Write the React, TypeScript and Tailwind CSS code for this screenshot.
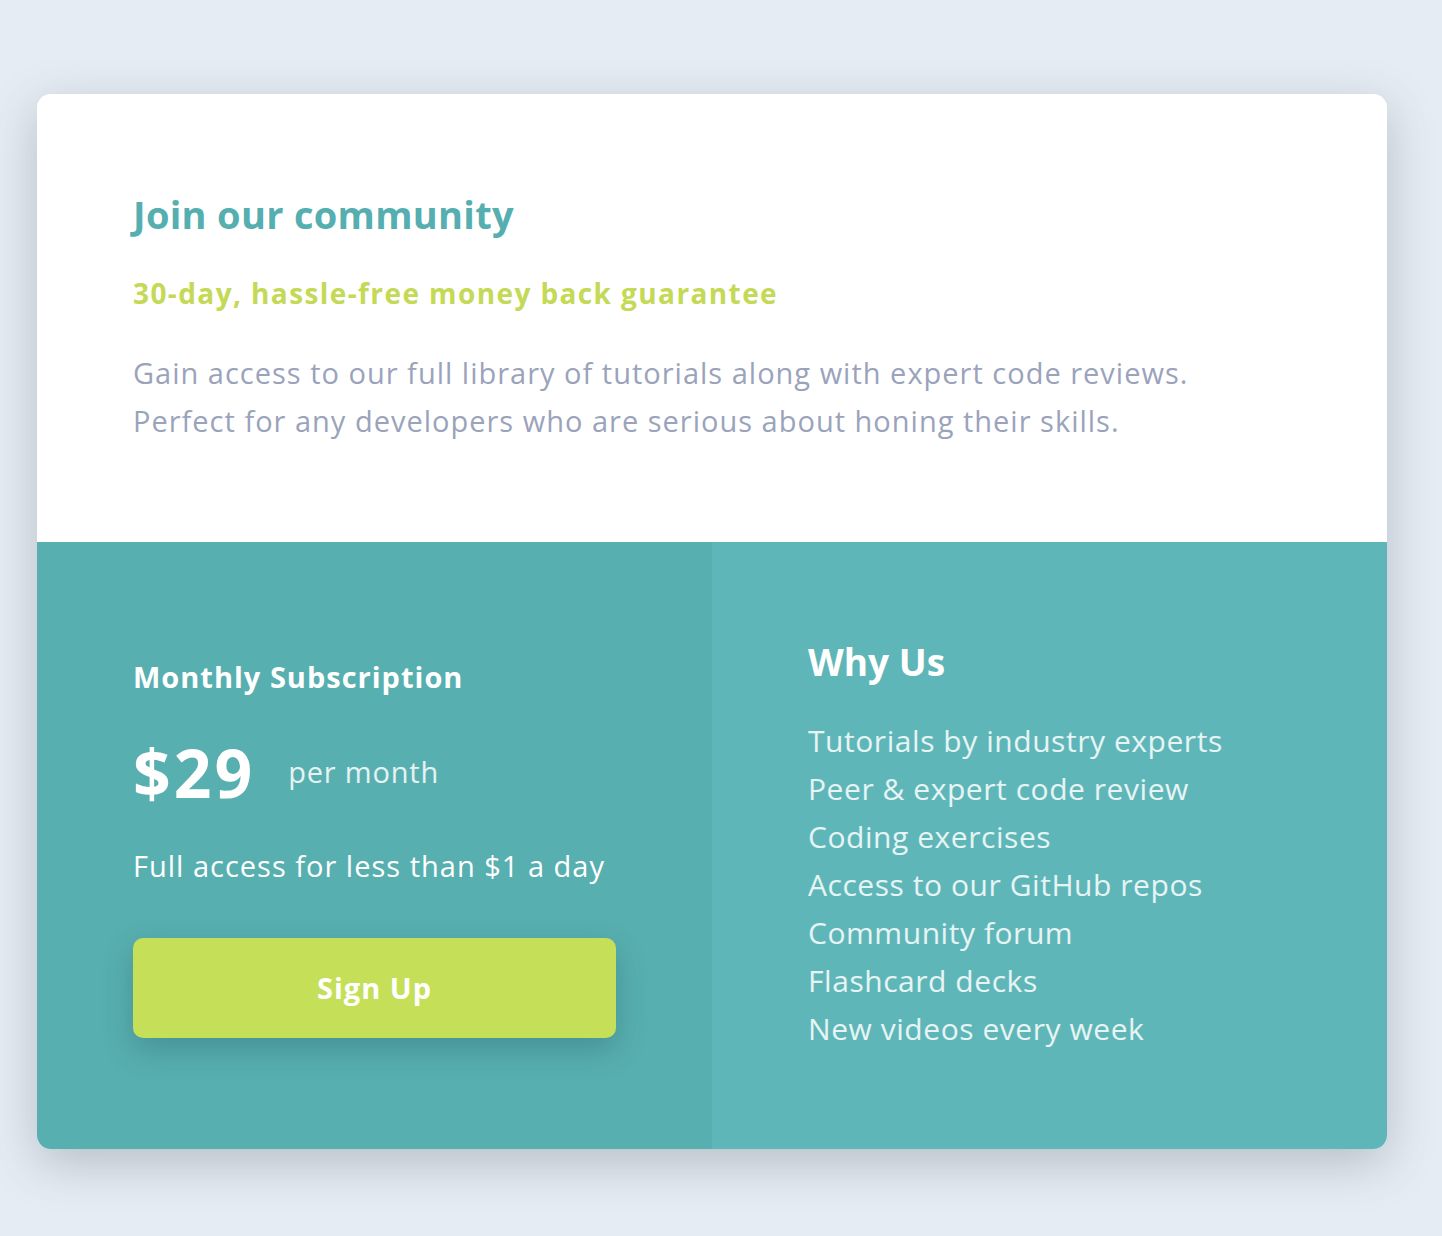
const features = [
  'Tutorials by industry experts',
  'Peer & expert code review',
  'Coding exercises',
  'Access to our GitHub repos',
  'Community forum',
  'Flashcard decks',
  'New videos every week',
];

export default function App() {
  return (
    <div className="min-h-[1236px] bg-[#e5ecf4] pt-[94px] pl-[37px] font-['Open_Sans',sans-serif]">
      <div className="w-[1350px] overflow-hidden rounded-[14px] shadow-[0_14px_48px_rgba(60,72,82,0.28)]">
        {/* top */}
        <section className="bg-white px-[96px] pt-[96px] pb-[97px]">
          <h1 className="text-[38px] leading-[48px] font-bold tracking-[0.3px] text-[#55aeb0]">Join our community</h1>
          <p className="mt-[35px] text-[28px] leading-[40px] font-bold tracking-[1.4px] text-[#c4d955]">
            30-day, hassle-free money back guarantee
          </p>
          <p className="mt-[36px] text-[29px] leading-[48px] tracking-[1px] text-[#9aa3bb]">
            Gain access to our full library of tutorials along with expert code reviews.
            <br />
            Perfect for any developers who are serious about honing their skills.
          </p>
        </section>

        {/* bottom */}
        <div className="grid grid-cols-2">
          <div className="bg-[#58afb0] px-[96px] pt-[115px] pb-[111px]">
            <h2 className="text-[29px] leading-[40px] font-bold tracking-[1px] text-white">Monthly Subscription</h2>
            <div className="mt-[39px] flex items-center gap-[33px] h-[72px]">
              <span className="text-[66px] leading-[72px] font-bold tracking-[3px] text-white">$29</span>
              <span className="text-[29px] leading-[40px] tracking-[0.8px] text-white/85">per month</span>
            </div>
            <p className="mt-[38px] text-[29px] leading-[40px] tracking-[1px] text-white">Full access for less than $1 a day</p>
            <button className="mt-[52px] flex h-[100px] w-[483px] items-center justify-center rounded-[10px] bg-[#c5df58] text-[29px] font-bold tracking-[1px] text-white shadow-[0_12px_30px_rgba(20,60,70,0.25)]">
              Sign Up
            </button>
          </div>

          <div className="bg-[#5fb6b8] px-[96px] pt-[96px] pb-[96px]">
            <h2 className="text-[37px] leading-[48px] font-bold text-white">Why Us</h2>
            <ul className="mt-[31px]">
              {features.map((f) => (
                <li key={f} className="text-[30px] leading-[48px] tracking-[0.55px] text-white/85">
                  {f}
                </li>
              ))}
            </ul>
          </div>
        </div>
      </div>
    </div>
  );
}
